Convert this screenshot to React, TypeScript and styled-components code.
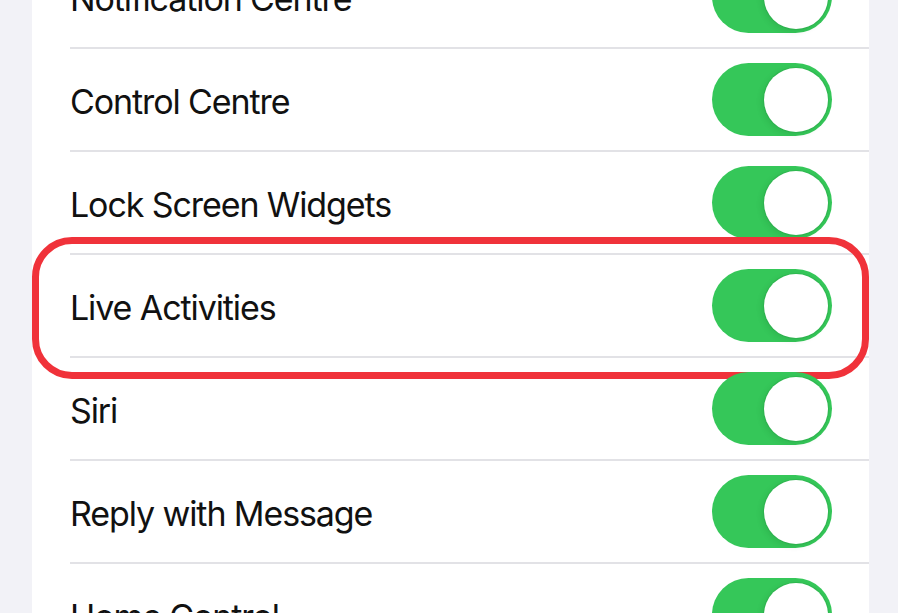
import React from "react";
import styled, { createGlobalStyle } from "styled-components";

const GlobalStyle = createGlobalStyle`
  html, body {
    margin: 0;
    padding: 0;
    height: 100%;
    overflow: hidden;
    background: #f2f2f7;
  }
  #root {
    height: 100%;
  }
`;

const Page = styled.div`
  width: 898px;
  height: 613px;
  overflow: hidden;
  background: #f2f2f7;
`;

const Card = styled.div`
  margin: -54px 29px 0 32px;
  background: #ffffff;
`;

const Row = styled.div`
  position: relative;
  padding-left: 38px;
`;

const RowInner = styled.div`
  display: flex;
  align-items: center;
  justify-content: space-between;
  height: 101px;
  padding-right: 37px;
  border-bottom: 2px solid #e2e2e6;
`;

const Label = styled.span`
  font-family: Inter, "Liberation Sans", sans-serif;
  font-size: 34px;
  font-weight: 400;
  letter-spacing: -1.1px;
  color: #111111;
  padding-top: 4px;
`;

const Switch = styled.div<{ $on: boolean }>`
  position: relative;
  width: 120px;
  height: 73px;
  border-radius: 37px;
  background: ${(p) => (p.$on ? "#35c759" : "#e9e9ea")};
  flex-shrink: 0;
`;

const Knob = styled.div<{ $on: boolean }>`
  position: absolute;
  top: 5px;
  ${(p) => (p.$on ? "right: 4px;" : "left: 4px;")}
  width: 64px;
  height: 64px;
  border-radius: 50%;
  background: #ffffff;
  box-shadow: 0 0 0 1px rgba(40, 160, 70, 0.35), -2px 2px 6px rgba(0, 60, 20, 0.12);
`;

// red annotation drawn over the highlighted row
const Highlight = styled.div`
  position: absolute;
  left: 0;
  right: 0;
  top: -18px;
  bottom: -21px;
  border: 7px solid #f0323a;
  border-radius: 40px;
  pointer-events: none;
`;

const items = [
  "Notification Centre",
  "Control Centre",
  "Lock Screen Widgets",
  "Live Activities",
  "Siri",
  "Reply with Message",
  "Home Control",
];

export default function App() {
  return (
    <Page>
      <GlobalStyle />
      <Card>
        {items.map((name) => (
          <Row key={name}>
            <RowInner>
              <Label>{name}</Label>
              <Switch $on>
                <Knob $on />
              </Switch>
            </RowInner>
            {name === "Live Activities" && <Highlight />}
          </Row>
        ))}
      </Card>
    </Page>
  );
}
